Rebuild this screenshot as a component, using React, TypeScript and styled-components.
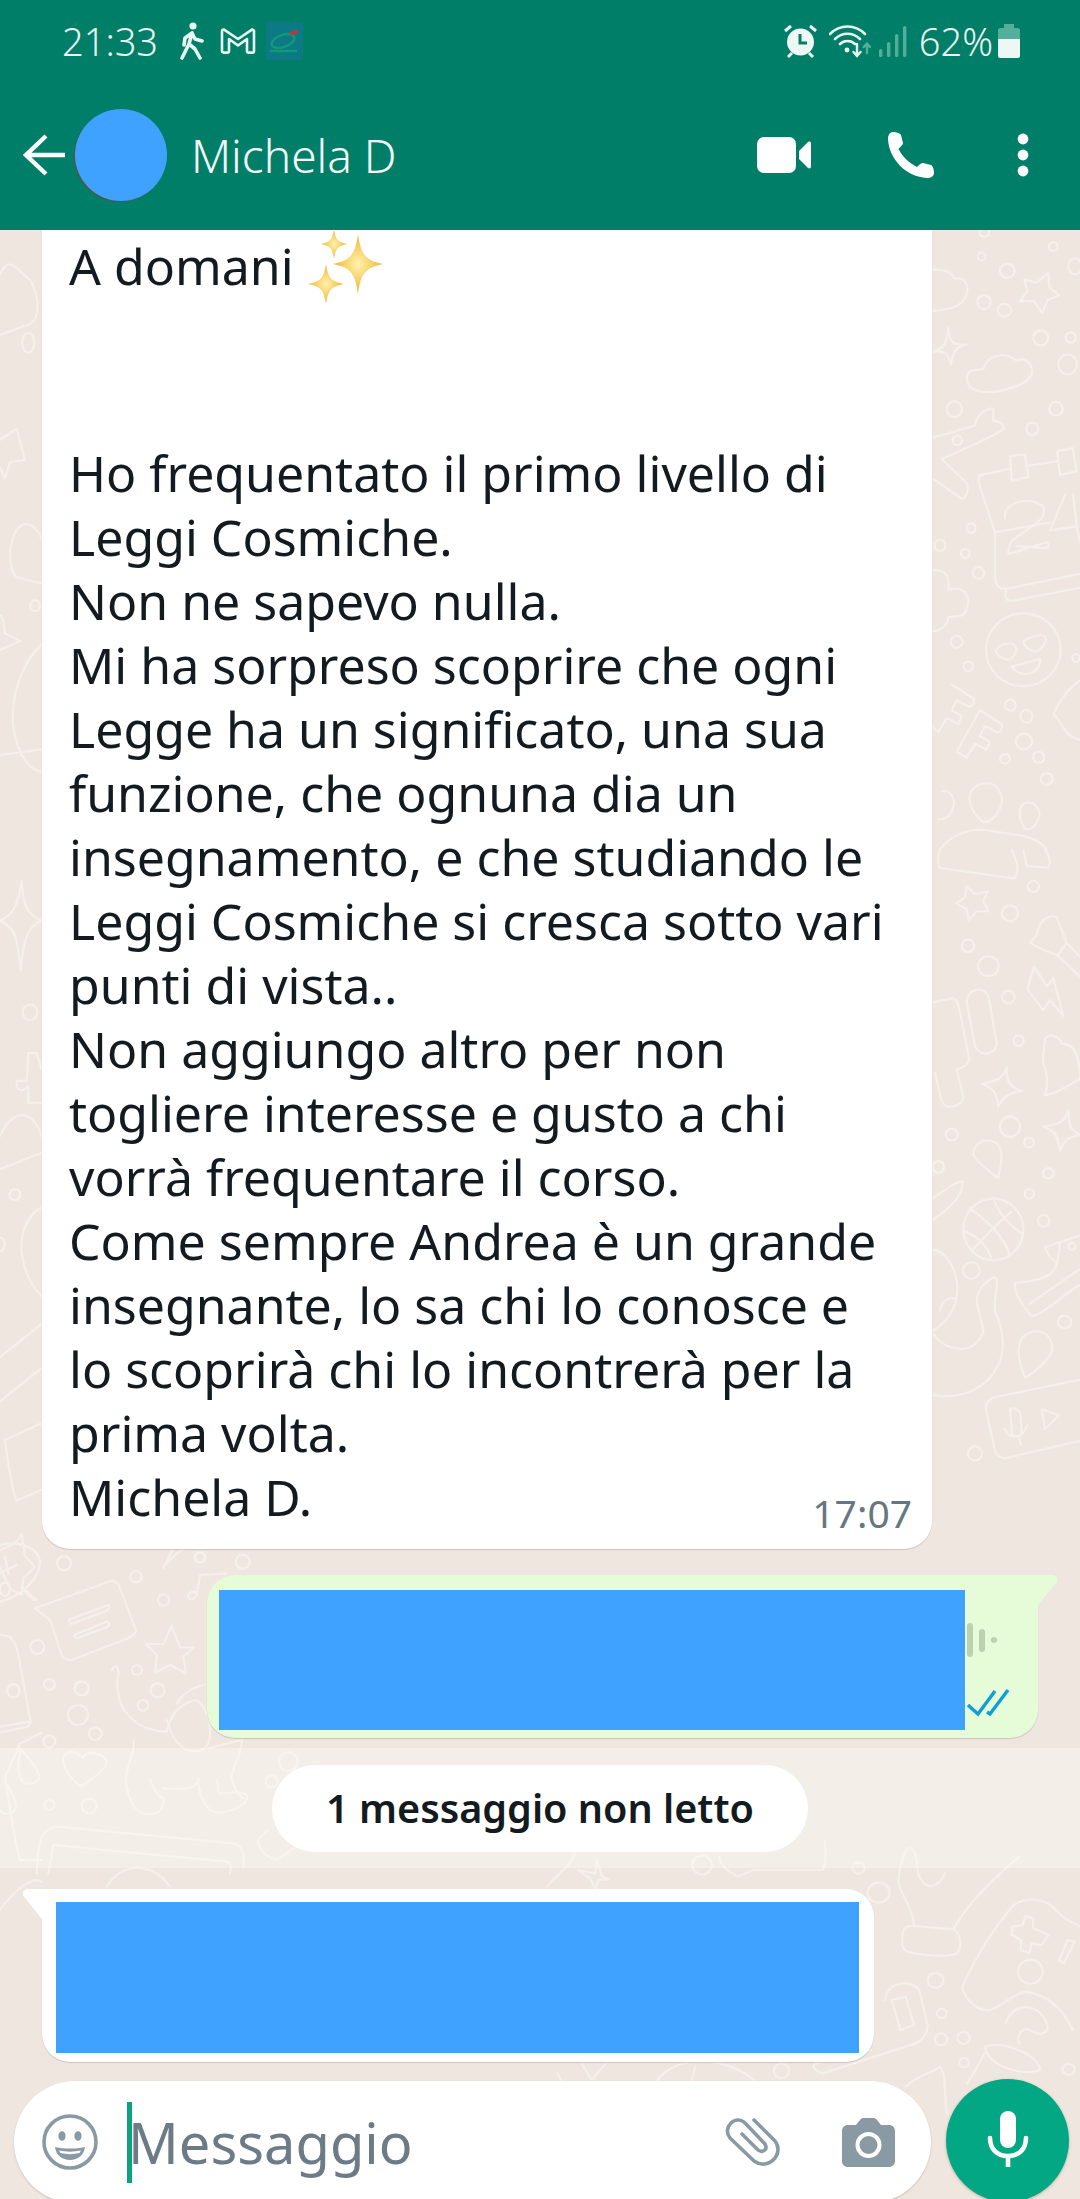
import React from 'react'
import styled, { createGlobalStyle } from 'styled-components'

const GlobalStyle = createGlobalStyle`
  html, body {
    margin: 0;
    padding: 0;
    background: #efe7df;
  }
  * {
    box-sizing: border-box;
  }
`

const Page = styled.div`
  position: relative;
  width: 1080px;
  height: 2199px;
  overflow: hidden;
  background: #efe7df;
  font-family: 'Noto Sans', 'Open Sans', sans-serif;
`

const WallpaperSvg = styled.svg`
  position: absolute;
  left: 0;
  top: 0;
  width: 1080px;
  height: 2199px;
  fill: none;
  stroke: #f5f0ea;
  stroke-linejoin: round;
  stroke-linecap: round;
`

const Header = styled.header`
  position: relative;
  height: 230px;
  background: #017e68;
  color: #fff;
`

const StatusBar = styled.div`
  height: 84px;
  padding: 22px 60px 0 62px;
  display: flex;
  justify-content: space-between;
  align-items: flex-start;
  color: #e8f5f1;
`

const StatusGroup = styled.div`
  display: flex;
  align-items: center;
  height: 38px;
`

const StatusText = styled.span<{ $gap?: number }>`
  font-size: 38px;
  font-weight: 300;
  line-height: 38px;
  margin-right: ${p => p.$gap ?? 0}px;
`

const StatusSvg = styled.svg<{ $w: number; $h: number; $gap?: number }>`
  width: ${p => p.$w}px;
  height: ${p => p.$h}px;
  margin-right: ${p => p.$gap ?? 0}px;
  flex: none;
`

const Toolbar = styled.div`
  height: 146px;
  padding: 0 0 4px 23px;
  display: flex;
  align-items: center;
`

const Avatar = styled.div`
  width: 92px;
  height: 92px;
  margin-left: 10px;
  border-radius: 50%;
  background: #40a2ff;
  box-shadow: -1px 1px 0 #5a5148;
  flex: none;
`

const ContactName = styled.div`
  margin-left: 24px;
  font-size: 46px;
  font-weight: 300;
  line-height: 60px;
  color: #f4fbf9;
  flex: 1;
`

const ToolIcon = styled.svg<{ $w: number; $h: number; $gap: number }>`
  width: ${p => p.$w}px;
  height: ${p => p.$h}px;
  margin-right: ${p => p.$gap}px;
  fill: #fff;
  flex: none;
`

const BackIcon = styled(ToolIcon)`
  fill: none;
  stroke: #fff;
  stroke-width: 4.4;
`

const Thread = styled.main`
  position: relative;
  display: flex;
  flex-direction: column;
`

const Bubble = styled.div`
  position: relative;
  background: #fff;
  box-shadow: 0 1px 1px rgba(120, 100, 85, 0.28);
`

const LongMessage = styled(Bubble)`
  margin-left: 42px;
  width: 890px;
  padding: 4px 20px 20px 27px;
  border-radius: 0 0 28px 28px;
  color: #131a20;
  font-size: 50px;
  line-height: 64px;
`

const Line = styled.div`
  white-space: nowrap;
`

const Greeting = styled(Line)`
  display: flex;
  align-items: center;
  height: 64px;
  margin-bottom: 143px;
`

const Sparkles = styled.svg`
  width: 78px;
  height: 76px;
  margin: -6px 0 -6px 14px;
  flex: none;
`

const Signature = styled.div`
  display: flex;
  justify-content: space-between;
  align-items: flex-end;
`

const Time = styled.span`
  font-size: 39px;
  line-height: 46px;
  color: #667781;
  margin-bottom: -7px;
`

const OutgoingBubble = styled(Bubble)`
  margin: 26px 0 0 207px;
  width: 831px;
  height: 163px;
  padding: 15px 0 0 12px;
  display: flex;
  background: #e6fcd9;
  border-radius: 28px 0 28px 28px;
  &::after {
    content: '';
    position: absolute;
    left: 100%;
    top: 0;
    width: 19px;
    height: 30px;
    background: #e6fcd9;
    clip-path: polygon(0 0, 82% 0, 100% 8%, 100% 22%, 0 100%);
  }
`

const Redacted = styled.div<{ $w: number; $h: number }>`
  width: ${p => p.$w}px;
  height: ${p => p.$h}px;
  background: #40a2ff;
  flex: none;
`

const VoiceSide = styled.div`
  width: 50px;
  padding: 33px 0 0 2px;
  display: flex;
  flex-direction: column;
  gap: 30px;
`

const VoiceSvg = styled.svg`
  width: 34px;
  height: 35px;
  fill: #bcd1b2;
`

const TicksSvg = styled.svg`
  width: 44px;
  height: 30px;
  fill: none;
  stroke: #0d9fd6;
  stroke-width: 3.4;
`

const UnreadBand = styled.div`
  margin-top: 10px;
  height: 120px;
  display: flex;
  align-items: center;
  justify-content: center;
  background: rgba(255, 255, 255, 0.3);
`

const UnreadPill = styled.div`
  width: 536px;
  height: 87px;
  border-radius: 44px;
  background: #fff;
  display: flex;
  align-items: center;
  justify-content: center;
  font-size: 39.6px;
  font-weight: 600;
  color: #131a20;
`

const IncomingBubble = styled(Bubble)`
  margin: 21px 0 0 42px;
  width: 832px;
  height: 173px;
  padding: 13px 0 0 14px;
  border-radius: 0 28px 28px 28px;
  &::before {
    content: '';
    position: absolute;
    right: 100%;
    top: 0;
    width: 19px;
    height: 30px;
    background: #fff;
    clip-path: polygon(18% 0, 100% 0, 100% 100%, 0 22%, 0 8%);
  }
`

const ComposerRow = styled.footer`
  position: relative;
  margin: 17px 0 0 14px;
  display: flex;
  align-items: flex-start;
`

const Composer = styled.div`
  margin-top: 2px;
  width: 917px;
  height: 122px;
  border-radius: 61px;
  background: #fff;
  box-shadow: 0 1px 2px rgba(120, 100, 85, 0.3);
  display: flex;
  align-items: center;
  padding-left: 28px;
`

const ComposerIcon = styled.svg<{ $w: number; $h: number; $gap?: number }>`
  width: ${p => p.$w}px;
  height: ${p => p.$h}px;
  margin-right: ${p => p.$gap ?? 0}px;
  flex: none;
`

const Caret = styled.div`
  width: 5px;
  height: 81px;
  background: #0ea37f;
  margin: 0 -4px 0 29px;
  flex: none;
`

const Placeholder = styled.div`
  flex: 1;
  font-size: 56px;
  line-height: 70px;
  color: #6d7b86;
`

const MicButton = styled.div`
  margin-left: 15px;
  width: 123px;
  height: 123px;
  border-radius: 50%;
  background: #04a784;
  box-shadow: 0 1px 3px rgba(90, 80, 70, 0.35);
  display: flex;
  align-items: center;
  justify-content: center;
`

const MicSvg = styled.svg`
  width: 42px;
  height: 56px;
  margin-bottom: 4px;
`

type Doodle = { x: number; y: number; sx: number; sy: number; dots: number[][]; paths: string[] }

// right margin, left margin and the gaps around the bubbles
const doodles: Doodle[] = [
  {
    x: 930, y: 230, sx: 1 / 3, sy: 1 / 2.53,
    dots: [[163, 5, 15, 12], [155, 67, 12, 10], [232, 103, 22, 18], [162, 183, 20, 18], [223, 203, 20, 16], [370, 42, 13, 11], [435, 92, 20, 20], [332, 273, 22, 19], [422, 272, 15, 13], [413, 340, 28, 25], [73, 453, 23, 20], [378, 452, 20, 17], [307, 503, 18, 16], [82, 532, 14, 12], [123, 754, 14, 12], [30, 798, 16, 15], [106, 818, 13, 11], [145, 868, 17, 15], [80, 1042, 18, 15], [115, 1104, 14, 12], [241, 1202, 16, 14], [289, 1230, 18, 16], [282, 1294, 24, 20], [225, 1338, 15, 12], [326, 1334, 17, 14], [350, 1389, 18, 15], [438, 1083, 11, 10], [280, 1062, 112, 92]],
    paths: [
      'M283 125 L320 133 L355 110 L358 145 L387 165 L352 178 L337 210 L312 180 L270 180 L292 155Z',
      'M10 205 C70 200 115 190 112 145 C105 120 85 122 72 122 C60 100 30 100 10 100',
      'M55 248 C60 290 70 290 110 290 C75 295 70 310 62 340 C55 310 40 305 10 308 C40 300 50 290 55 248Z',
      'M125 355 L160 352 C175 310 225 310 260 330 C290 320 310 340 305 365 C290 395 190 420 135 405 C105 395 105 365 125 355Z',
      'M10 525 L135 495 C140 465 170 450 190 452 L190 483 C210 485 225 490 220 505 C150 540 80 560 35 580 L110 640 C120 660 105 680 95 680 L10 630',
      'M240 572 L285 568 L295 625 L245 635Z M382 560 L428 552 L440 610 L390 620Z M290 597 L380 585',
      'M235 605 L150 620 C145 625 145 635 150 650 L195 765 L195 880 C198 900 210 910 230 908 L450 870',
      'M230 908 C220 930 230 940 250 938 L450 905 M195 765 L360 740',
      'M225 730 C215 690 300 670 340 700 C350 730 320 740 290 760 C260 780 235 780 235 820 L350 790 C360 795 355 805 345 805 L260 800',
      'M405 670 L360 760 L440 750 L430 670 M440 750 L450 790',
      'M197 1065 C215 1040 255 1040 260 1060 C255 1085 235 1090 225 1085 C215 1082 200 1075 197 1065Z M280 1040 C300 1030 345 1015 348 1035 C340 1060 320 1070 310 1065 C295 1060 282 1055 280 1040Z M245 1105 L330 1085 C335 1120 275 1140 245 1105Z',
      'M65 1150 L130 1185 C135 1195 125 1210 115 1205 L80 1190 L65 1215 L95 1230 L85 1250 L50 1235 L25 1270 L5 1255',
      'M150 1215 L215 1250 C220 1260 210 1275 200 1270 L165 1255 L150 1280 L180 1295 L170 1315 L135 1300 L110 1335 L80 1320Z',
      'M165 1400 C200 1395 220 1430 215 1450 C205 1480 180 1500 160 1498 C130 1480 115 1450 120 1430 C125 1410 145 1400 165 1400Z',
      'M35 1420 C60 1415 78 1440 70 1460 C60 1485 40 1495 25 1490 M295 1448 C320 1450 335 1470 325 1490 C315 1510 300 1520 285 1515 C265 1490 260 1450 295 1448Z',
      'M30 1568 C60 1530 120 1510 180 1520 C250 1530 320 1530 350 1568',
      'M370 1225 C400 1170 440 1145 450 1140 M370 1225 C395 1240 400 1280 450 1290',
      'M10 860 C50 860 60 880 55 910 C95 900 125 920 110 960 C100 985 70 975 55 980 C55 1000 30 1015 10 1015'
    ]
  },
  {
    x: 930, y: 850, sx: 1 / 3, sy: 1 / 2.53,
    dots: [[310, 92, 17, 14], [240, 160, 24, 20], [114, 242, 19, 16], [175, 294, 31, 25], [235, 372, 19, 16], [266, 482, 15, 13], [65, 720, 18, 15], [240, 700, 30, 26], [297, 740, 15, 12], [355, 818, 16, 13], [25, 802, 17, 15], [298, 870, 14, 12], [341, 938, 17, 15], [190, 960, 90, 78], [124, 1064, 25, 21], [404, 1194, 20, 16], [135, 1527, 21, 18], [426, 1003, 10, 9]],
    paths: [
      'M110 92 L135 112 L172 105 L160 130 L175 155 L140 155 L115 178 L110 150 L78 135 L105 120Z',
      'M30 45 L250 72 C262 70 265 50 260 30 L245 0 M30 0 C20 25 25 45 30 45 M280 0 L290 40 L355 45 C365 30 355 10 345 0',
      'M300 235 L320 215 C330 165 370 165 380 170 L410 235 L385 265 C350 260 320 245 300 235Z M410 235 L450 270 M380 265 L450 320',
      'M312 295 L350 345 L370 325 L400 420 L360 380 L340 405 L292 352Z',
      'M135 355 C175 345 178 380 180 390 L200 490 C195 525 140 520 135 495 L110 385 C110 370 120 358 135 355Z',
      'M10 385 L70 375 C85 380 85 395 90 410 L118 530 C110 550 95 550 80 555 L100 625 C95 650 50 660 35 635 L15 565',
      'M230 550 C230 590 240 600 275 610 C240 615 220 620 205 650 C200 615 190 600 155 592 C190 585 215 585 230 550Z',
      'M415 660 C415 700 425 710 450 720 C425 725 405 730 390 760 C385 725 375 710 340 700 C375 695 400 695 415 660Z',
      'M345 480 C350 465 385 465 395 490 C430 490 450 520 450 580 C420 590 380 620 345 620 C355 590 350 560 340 540 C335 515 345 500 345 480Z',
      'M170 735 C205 735 220 755 213 790 L205 830 C180 815 140 790 130 770 C130 750 150 735 170 735Z',
      'M10 880 C40 865 70 840 98 838 C100 880 50 910 10 935',
      'M120 905 C160 935 210 960 240 1025 M105 965 C140 975 170 1000 182 1030 M190 880 C200 910 230 945 275 970 M130 1010 C160 985 190 950 245 915',
      'M10 1010 C60 1020 90 1080 80 1130 C75 1170 40 1200 10 1215 M30 1165 C35 1140 60 1130 75 1135 M10 1225 C50 1270 130 1280 160 1220 C160 1190 130 1150 145 1120 C160 1095 190 1075 200 1085 C205 1110 190 1130 195 1170 C220 1210 230 1270 200 1310 C170 1360 100 1390 10 1380',
      'M345 1005 L450 975 M345 1005 C350 1020 365 1035 382 1045 L390 995 M382 1045 C370 1080 330 1090 255 1095 C250 1120 280 1155 305 1180 C340 1175 400 1125 450 1100 M295 1150 L450 1060',
      'M320 1218 C355 1218 372 1245 365 1270 C345 1300 310 1325 285 1335 C270 1305 260 1270 270 1245 C280 1225 300 1218 320 1218Z',
      'M190 1385 L450 1340 M190 1385 C165 1395 165 1410 170 1425 L195 1520 C200 1535 215 1540 230 1538 L450 1495 M240 1415 C250 1410 270 1415 272 1430 L275 1475 C265 1490 245 1485 245 1470Z M225 1465 C235 1485 270 1500 292 1455 M268 1490 L272 1505 M335 1415 L388 1430 L345 1465Z'
    ]
  },
  {
    x: 0, y: 1540, sx: 1 / 3, sy: 1 / 3,
    dots: [[192, 70, 21, 21], [408, 110, 17, 17], [600, 52, 15, 15], [728, 65, 21, 21], [491, 180, 17, 17], [112, 321, 21, 21], [411, 390, 15, 15], [148, 433, 16, 16], [245, 445, 21, 21], [473, 451, 21, 21], [429, 496, 16, 16], [234, 525, 30, 30], [286, 581, 19, 19], [148, 604, 18, 18], [148, 795, 15, 15], [267, 798, 22, 22], [815, 725, 18, 18], [865, 665, 28, 28]],
    paths: [
      'M0 15 C60 0 120 25 120 70 C115 120 60 170 0 185 M65 140 L110 180 L100 180 L65 145 M0 100 L50 75 M15 50 L25 100',
      'M105 205 L335 122 C350 125 355 130 360 145 L408 270 C405 285 395 290 385 295 L215 360 C200 360 190 355 185 345 L150 240Z M205 240 L325 195 C335 200 325 210 320 212 L215 252Z M222 285 L320 245 C335 250 325 260 320 262 L230 295Z',
      'M515 258 L540 322 L582 322 L550 350 L558 400 L510 375 L465 398 L470 345 L438 312 L490 312Z',
      'M0 285 L30 290 C45 310 50 320 55 345 L92 545 C90 555 85 560 75 562 L0 578 M0 560 L90 545',
      'M335 390 C345 370 355 380 355 400 C345 450 360 510 400 540 C420 560 460 575 500 575 C510 530 540 485 590 480 C620 500 640 560 625 610 C610 640 570 640 545 620 C510 590 510 560 500 540',
      'M400 600 C410 640 370 690 378 730 C385 770 400 820 440 822 C480 825 495 800 490 775 C470 770 460 740 450 720 M490 745 C560 750 595 745 595 715 M595 715 C595 770 620 820 660 818 C700 815 750 790 740 765 C720 750 690 760 655 760 C655 740 655 730 650 720',
      'M530 490 C560 440 630 420 680 440 M625 625 L725 600 M725 600 C730 640 690 690 695 720 C705 750 720 770 730 775',
      'M190 650 C205 625 240 640 248 655 C262 625 310 640 320 665 C320 690 270 720 245 738 C215 725 185 680 190 650Z',
      'M62 625 C80 650 130 700 115 720 C100 735 75 735 65 720 C50 700 55 660 62 625Z M22 735 C35 760 55 790 45 810 C30 825 5 825 0 810',
      'M110 1000 C115 900 120 870 170 860 L700 910 C725 915 735 940 730 980 M145 1000 L160 915 L680 965 C695 970 695 985 690 1000 M320 1040 C370 960 460 970 510 1040',
      'M600 105 L590 165 C580 185 560 180 565 165 C575 150 590 155 590 160 M600 105 L680 100 M490 80 L520 50 L550 25 M490 85 L520 25',
      'M780 920 C760 900 790 885 805 870 M830 960 C800 950 790 940 780 920 M830 960 L890 920'
    ]
  },
  {
    x: 540, y: 1840, sx: 1 / 2.9, sy: 1 / 3,
    dots: [[982, 158, 32, 30], [1147, 421, 23, 22], [1165, 520, 14, 14], [1163, 598, 18, 18], [1228, 594, 18, 18], [1230, 668, 14, 14], [1533, 688, 18, 16], [1422, 395, 36, 36], [924, 84, 17, 17], [470, 75, 28, 28], [700, 692, 22, 22]],
    paths: [
      'M1050 300 C1050 265 1060 255 1085 258 L1200 268 C1220 280 1225 320 1210 340 C1180 355 1100 345 1065 335 C1050 325 1050 315 1050 300Z',
      'M1085 255 C1080 200 1040 150 1040 130 C1040 80 1060 20 1075 25 C1100 40 1090 90 1100 110 C1120 150 1150 150 1175 100 M1200 265 C1240 190 1310 120 1390 50',
      'M1225 440 C1260 360 1310 270 1370 200 C1400 170 1470 170 1500 215 C1520 240 1550 250 1568 260 M1225 440 C1230 480 1270 515 1305 510 C1340 500 1370 460 1410 455 C1460 465 1510 490 1545 570',
      'M1370 260 L1400 255 L1408 228 L1430 235 L1430 265 L1475 285 L1455 315 L1425 310 L1420 340 L1395 330 L1395 300 L1368 285Z M1505 360 L1530 300 L1550 305 L1520 370Z',
      'M1350 550 C1370 490 1440 480 1470 550 C1480 580 1450 590 1420 570 C1400 560 1380 585 1390 610',
      'M1290 620 C1350 600 1450 650 1450 690 C1400 710 1300 680 1290 620Z M1290 640 C1270 680 1250 710 1240 730',
      'M1000 480 C1010 420 1080 420 1100 450 L1125 560 C1120 590 1100 605 1090 610 L820 700 C810 700 780 680 800 670 L960 630',
      'M1060 470 L1085 555 L1045 570 L1020 480Z',
      'M1060 740 C1100 700 1140 700 1160 680 C1180 700 1170 760 1180 820 M100 0 C120 60 60 90 20 140 M520 50 C530 100 560 90 570 110 L620 90 L820 90 C830 70 830 30 825 0',
      'M110 90 L160 100 L165 60 L180 110 L200 118 L170 120 L160 145 L145 115Z',
      'M50 700 L60 720 M120 670 L150 720 L190 670 M340 720 C400 640 540 650 620 720 M450 680 L440 720'
    ]
  },
  {
    x: 0, y: 230, sx: 1 / 3, sy: 1 / 0.905,
    dots: [[85, 102, 18, 9], [105, 340, 14, 5], [90, 708, 22, 7], [45, 873, 16, 5], [15, 1230, 15, 6], [40, 1322, 18, 6], [0, 918, 14, 6]],
    paths: [
      'M0 40 C30 20 60 40 90 45 C120 60 120 80 90 85 L0 95',
      'M0 190 L50 180 L75 208 L30 210 L15 225 L0 215',
      'M30 290 C50 255 110 265 125 280 M30 290 C30 305 40 315 60 315 L125 320',
      'M0 350 C5 345 10 355 15 365 L60 372 L0 380 M125 375 C70 390 30 420 40 450 C55 480 100 490 125 490 M0 475 L125 470',
      'M65 590 C70 610 80 620 125 625 C85 630 70 640 62 670 C55 640 40 630 0 625 C40 620 55 610 65 590Z',
      'M50 770 L80 770 L85 745 L110 745 L125 760 M50 770 C45 780 70 780 85 775 L85 790 L125 790',
      'M0 820 C30 800 90 790 125 820 M0 850 L125 835 M125 885 C80 890 60 910 65 925 C75 950 110 960 125 965',
      'M0 1020 L125 990 M0 1060 L125 1030 M15 1095 L125 1080 M15 1095 C25 1120 40 1145 50 1150 L125 1140',
      'M0 1195 C30 1190 50 1190 65 1180 L75 1200 L105 1210 L70 1220 L65 1235 L30 1230 L0 1210',
      'M15 1400 L60 1370 L125 1360 M15 1400 C30 1430 45 1460 60 1475 L125 1475 M0 1520 C50 1500 100 1490 125 1495'
    ]
  }
]

const Wallpaper = () => (
  <WallpaperSvg viewBox="0 0 1080 2199">
    {doodles.map((d, i) => (
      <g key={i} transform={`translate(${d.x} ${d.y}) scale(${d.sx} ${d.sy})`}>
        {d.dots.map((c, j) => <ellipse key={j} cx={c[0]} cy={c[1]} rx={c[2]} ry={c[3]} vectorEffect="non-scaling-stroke" strokeWidth={2.2} />)}
        {d.paths.map((p, j) => <path key={j} d={p} vectorEffect="non-scaling-stroke" strokeWidth={2.2} />)}
      </g>
    ))}
  </WallpaperSvg>
)

const messageLines = [
  'Ho frequentato il primo livello di',
  'Leggi Cosmiche.',
  'Non ne sapevo nulla.',
  'Mi ha sorpreso scoprire che ogni',
  'Legge ha un significato, una sua',
  'funzione, che ognuna dia un',
  'insegnamento, e che studiando le',
  'Leggi Cosmiche si cresca sotto vari',
  'punti di vista..',
  'Non aggiungo altro per non',
  'togliere interesse e gusto a chi',
  'vorrà frequentare il corso.',
  'Come sempre Andrea è un grande',
  'insegnante, lo sa chi lo conosce e',
  'lo scoprirà chi lo incontrerà per la',
  'prima volta.'
]

const star = (cx: number, cy: number, rx: number, ry: number) =>
  `M${cx} ${cy - ry} C${cx + rx * 0.12} ${cy - ry * 0.3} ${cx + rx * 0.3} ${cy - ry * 0.12} ${cx + rx} ${cy} C${cx + rx * 0.3} ${cy + ry * 0.12} ${cx + rx * 0.12} ${cy + ry * 0.3} ${cx} ${cy + ry} C${cx - rx * 0.12} ${cy + ry * 0.3} ${cx - rx * 0.3} ${cy + ry * 0.12} ${cx - rx} ${cy} C${cx - rx * 0.3} ${cy - ry * 0.12} ${cx - rx * 0.12} ${cy - ry * 0.3} ${cx} ${cy - ry}Z`

export default function App() {
  return (
    <Page>
      <GlobalStyle />
      <Wallpaper />
      <Header>
        <StatusBar>
          <StatusGroup>
            <StatusText $gap={21}>21:33</StatusText>
            <StatusSvg $w={26} $h={38} $gap={15} viewBox="0 0 26 38" fill="none" stroke="#e8f5f1" strokeWidth="3.6" strokeLinecap="round" strokeLinejoin="round">
              <circle cx="14" cy="4" r="3.6" fill="#e8f5f1" stroke="none" />
              <path d="M13 11 L10 22 L3 36 M10 22 L16 27 L21 36 M13 11 L6 16 L5 23 M13 11 L16 17 L23 19" />
            </StatusSvg>
            <StatusSvg $w={36} $h={26} $gap={10} viewBox="0 0 36 26" fill="none" stroke="#e8f5f1" strokeWidth="2.6" strokeLinejoin="round">
              <path d="M2 3 C2 1.8 3 1.4 4 1.6 L18 11 L32 1.6 C33 1.4 34 1.8 34 3 L34 23 C34 24 33.4 24.6 32.4 24.6 L28.6 24.6 C27.6 24.6 27 24 27 23 L27 11 L18 17.5 L9 11 L9 23 C9 24 8.4 24.6 7.4 24.6 L3.6 24.6 C2.6 24.6 2 24 2 23Z" />
            </StatusSvg>
            <StatusSvg $w={37} $h={38} viewBox="0 0 37 38">
              <rect width="37" height="38" fill="#0b7a84" />
              <ellipse cx="17" cy="19" rx="12" ry="6" fill="none" stroke="#0f9a7a" strokeWidth="2.4" transform="rotate(-20 17 19)" />
              <path d="M24 12 L32 9" stroke="#c9303a" strokeWidth="3" />
              <path d="M4 29 H31" stroke="#0f9a7a" strokeWidth="2.4" />
            </StatusSvg>
          </StatusGroup>
          <StatusGroup>
            <StatusSvg $w={33} $h={34} $gap={12} viewBox="0 0 33 34">
              <circle cx="16.5" cy="18" r="13.5" fill="#edf7f4" />
              <path d="M16 10 V19 H23" fill="none" stroke="#017e68" strokeWidth="3" />
              <path d="M1 7 L7 2 M32 7 L26 2 M4 33 L8 29 M29 33 L25 29" stroke="#edf7f4" strokeWidth="3" />
            </StatusSvg>
            <StatusSvg $w={42} $h={34} $gap={8} viewBox="0 0 42 34" fill="none" stroke="#e8f5f1" strokeWidth="2.6" strokeLinecap="round">
              <path d="M1 10 C11 0 26 0 36 10 M6 15 C13 8 24 8 31 15 M11 20 C15 16 22 16 26 20" />
              <circle cx="18" cy="26" r="2.4" fill="#e8f5f1" stroke="none" />
              <path d="M28 20 V31 M24.5 28 L28 32 L31.5 28" strokeWidth="2.4" />
              <path d="M38 29 V20 M34.8 23 L38 19.5 L41 23" stroke="#54ae9b" strokeWidth="2.4" />
            </StatusSvg>
            <StatusSvg $w={28} $h={32} $gap={12} viewBox="0 0 28 32" fill="#54ae9b">
              <rect x="0" y="24" width="3.4" height="8" rx="1.6" />
              <rect x="8" y="17" width="3.4" height="15" rx="1.6" />
              <rect x="16" y="9" width="3.4" height="23" rx="1.6" />
              <rect x="24" y="1" width="3.4" height="31" rx="1.6" />
            </StatusSvg>
            <StatusText $gap={5}>62%</StatusText>
            <StatusSvg $w={22} $h={34} viewBox="0 0 22 34">
              <path d="M6 0 H16 V4 H20 C21 4 22 5 22 6 V15 H0 V6 C0 5 1 4 2 4 H6Z" fill="#54ae9b" />
              <path d="M0 15 H22 V32 C22 33 21 34 20 34 H2 C1 34 0 33 0 32Z" fill="#edf7f4" />
            </StatusSvg>
          </StatusGroup>
        </StatusBar>
        <Toolbar>
          <BackIcon $w={42} $h={42} $gap={0} viewBox="0 0 42 42">
            <path d="M42 21 H4 M23 2 L3 21 L23 40" />
          </BackIcon>
          <Avatar />
          <ContactName>Michela D</ContactName>
          <ToolIcon $w={54} $h={36} $gap={77} viewBox="0 0 54 36">
            <rect x="0" y="0" width="39" height="36" rx="7" />
            <path d="M42 14 L51 5 C52 4 54 4.6 54 6.4 V29.6 C54 31.4 52 32 51 31 L42 22Z" />
          </ToolIcon>
          <ToolIcon $w={46} $h={46} $gap={83} viewBox="0 0 46 46">
            <path d="M5 0 C8 0 12 1 13 3 L15 11 C15 13 12 15 10.5 17 C14 24 21 31 29 35 C31 33 33 31 35 31 L43 33 C45 34 46 38 46 41 C46 44 43 46 39 46 C18 45 1 27 0 7 C0 3 2 0 5 0Z" />
          </ToolIcon>
          <ToolIcon $w={12} $h={44} $gap={51} viewBox="0 0 12 44">
            <circle cx="6" cy="6" r="5.4" />
            <circle cx="6" cy="22" r="5.4" />
            <circle cx="6" cy="38" r="5.4" />
          </ToolIcon>
        </Toolbar>
      </Header>
      <Thread>
        <LongMessage>
          <Greeting>
            A domani
            <Sparkles viewBox="0 0 78 76">
              <defs>
                <radialGradient id="spark">
                  <stop offset="0%" stopColor="#fff2ae" />
                  <stop offset="100%" stopColor="#f0b52e" />
                </radialGradient>
              </defs>
              <path d={star(26, 16, 13, 15)} fill="url(#spark)" />
              <path d={star(50, 36, 25, 30)} fill="url(#spark)" />
              <path d={star(18, 56, 18, 20)} fill="url(#spark)" />
            </Sparkles>
          </Greeting>
          {messageLines.map(line => <Line key={line}>{line}</Line>)}
          <Signature>
            <Line>Michela D.</Line>
            <Time>17:07</Time>
          </Signature>
        </LongMessage>
        <OutgoingBubble>
          <Redacted $w={746} $h={140} />
          <VoiceSide>
            <VoiceSvg viewBox="0 0 34 35">
              <rect x="0" y="0" width="6" height="34" rx="3" />
              <rect x="12" y="6" width="6" height="23" rx="3" />
              <circle cx="27" cy="17" r="3" />
            </VoiceSvg>
            <TicksSvg viewBox="0 0 44 30">
              <path d="M1 17 L11 26 L28 3 M20 24 L23 26 L41 2" />
            </TicksSvg>
          </VoiceSide>
        </OutgoingBubble>
        <UnreadBand>
          <UnreadPill>1 messaggio non letto</UnreadPill>
        </UnreadBand>
        <IncomingBubble>
          <Redacted $w={803} $h={151} />
        </IncomingBubble>
        <ComposerRow>
          <Composer>
            <ComposerIcon $w={56} $h={56} viewBox="0 0 56 56">
              <circle cx="28" cy="28" r="26" fill="none" stroke="#8a9aa4" strokeWidth="3.6" />
              <ellipse cx="20" cy="22" rx="3.6" ry="4.8" fill="#8a9aa4" />
              <ellipse cx="36" cy="22" rx="3.6" ry="4.8" fill="#8a9aa4" />
              <path d="M13 33 C22 35 34 35 43 33 C42 41 36 46 28 46 C20 46 14 41 13 33Z" fill="#8a9aa4" />
              <path d="M17 36.5 C24 38 32 38 39 36.5 L37.5 39 C31 40.5 25 40.5 18.5 39Z" fill="#fff" />
            </ComposerIcon>
            <Caret />
            <Placeholder>Messaggio</Placeholder>
            <ComposerIcon $w={55} $h={49} $gap={62} viewBox="0 0 55 49" fill="none" stroke="#8a9aa4" strokeWidth="3.6" strokeLinecap="round" strokeLinejoin="round">
              <path d="M29 2 L50 23 C54 28 54 35 50 40 C44 47 36 48 29 43 L5 20 C1 15 2 9 6 5 C10 1 16 1 20 5 L40 26 C42 30 41 32 38 33 C36 34 34 33 32 31 L17 16" />
            </ComposerIcon>
            <ComposerIcon $w={53} $h={49} $gap={36} viewBox="0 0 53 49">
              <path d="M6 7 H14 L18 2 C19 0.6 20 0 22 0 H31 C33 0 34 0.6 35 2 L39 7 H47 C50.5 7 53 9.5 53 13 V43 C53 46.5 50.5 49 47 49 H6 C2.5 49 0 46.5 0 43 V13 C0 9.5 2.5 7 6 7Z" fill="#8a9aa4" />
              <circle cx="26.5" cy="27" r="11" fill="#8a9aa4" stroke="#fff" strokeWidth="4" />
            </ComposerIcon>
          </Composer>
          <MicButton>
            <MicSvg viewBox="0 0 42 56">
              <rect x="13" y="0" width="16" height="37" rx="8" fill="#fff" />
              <path d="M3 27 C3 38 10 45 21 45 C32 45 39 38 39 27" fill="none" stroke="#fff" strokeWidth="4.6" strokeLinecap="round" />
              <path d="M21 45 V56" stroke="#fff" strokeWidth="4.6" />
            </MicSvg>
          </MicButton>
        </ComposerRow>
      </Thread>
    </Page>
  )
}
